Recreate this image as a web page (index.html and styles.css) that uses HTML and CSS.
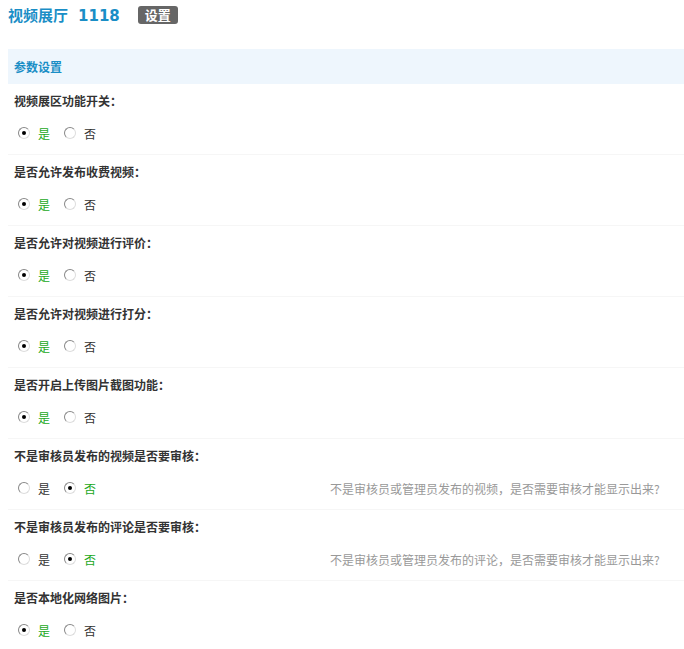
FILE: index.html
```html
<!DOCTYPE html>
<html lang="zh-CN">

<head>
  <meta charset="UTF-8">
  <title>视频展厅</title>
  <link rel="stylesheet" href="styles.css">
</head>

<body>
  <div class="page__title">
    <h1 class="title">视频展厅<span class="title__num">1118</span></h1>
    <a href="" class="badge">设置</a>
  </div>

  <div class="panel">
    <div class="panel__head">参数设置</div>

    <div class="opt">
      <div class="opt__label">视频展区功能开关：</div>
      <div class="opt__line">
        <div class="opt__radios">
          <label class="radio _on"><span class="radio__dot"></span><span class="radio__text">是</span></label>
          <label class="radio"><span class="radio__dot"></span><span class="radio__text">否</span></label>
        </div>
      </div>
    </div>

    <div class="opt">
      <div class="opt__label">是否允许发布收费视频：</div>
      <div class="opt__line">
        <div class="opt__radios">
          <label class="radio _on"><span class="radio__dot"></span><span class="radio__text">是</span></label>
          <label class="radio"><span class="radio__dot"></span><span class="radio__text">否</span></label>
        </div>
      </div>
    </div>

    <div class="opt">
      <div class="opt__label">是否允许对视频进行评价：</div>
      <div class="opt__line">
        <div class="opt__radios">
          <label class="radio _on"><span class="radio__dot"></span><span class="radio__text">是</span></label>
          <label class="radio"><span class="radio__dot"></span><span class="radio__text">否</span></label>
        </div>
      </div>
    </div>

    <div class="opt">
      <div class="opt__label">是否允许对视频进行打分：</div>
      <div class="opt__line">
        <div class="opt__radios">
          <label class="radio _on"><span class="radio__dot"></span><span class="radio__text">是</span></label>
          <label class="radio"><span class="radio__dot"></span><span class="radio__text">否</span></label>
        </div>
      </div>
    </div>

    <div class="opt">
      <div class="opt__label">是否开启上传图片截图功能：</div>
      <div class="opt__line">
        <div class="opt__radios">
          <label class="radio _on"><span class="radio__dot"></span><span class="radio__text">是</span></label>
          <label class="radio"><span class="radio__dot"></span><span class="radio__text">否</span></label>
        </div>
      </div>
    </div>

    <div class="opt">
      <div class="opt__label">不是审核员发布的视频是否要审核：</div>
      <div class="opt__line">
        <div class="opt__radios">
          <label class="radio"><span class="radio__dot"></span><span class="radio__text">是</span></label>
          <label class="radio _on"><span class="radio__dot"></span><span class="radio__text">否</span></label>
        </div>
        <div class="opt__hint">不是审核员或管理员发布的视频，是否需要审核才能显示出来?</div>
      </div>
    </div>

    <div class="opt">
      <div class="opt__label">不是审核员发布的评论是否要审核：</div>
      <div class="opt__line">
        <div class="opt__radios">
          <label class="radio"><span class="radio__dot"></span><span class="radio__text">是</span></label>
          <label class="radio _on"><span class="radio__dot"></span><span class="radio__text">否</span></label>
        </div>
        <div class="opt__hint">不是审核员或管理员发布的评论，是否需要审核才能显示出来?</div>
      </div>
    </div>

    <div class="opt">
      <div class="opt__label">是否本地化网络图片：</div>
      <div class="opt__line">
        <div class="opt__radios">
          <label class="radio _on"><span class="radio__dot"></span><span class="radio__text">是</span></label>
          <label class="radio"><span class="radio__dot"></span><span class="radio__text">否</span></label>
        </div>
      </div>
    </div>
  </div>
</body>

</html>
```

FILE: styles.css
```css
body {
  margin: 0;
  padding: 0 0 0 8px;
  font-family: "Noto Sans CJK SC", "DejaVu Sans", sans-serif;
  font-size: 12px;
  color: #333;
  background-color: #fff;
}

.page__title {
  display: flex;
  align-items: center;
  height: 30px;
}

.title {
  margin: 0;
  font-size: 15px;
  font-weight: bold;
  color: #1a8ec6;
  line-height: 30px;
}

.title__num {
  margin-left: 10px;
  font-family: "DejaVu Sans", sans-serif;
  font-size: 15px;
}

.badge {
  margin-left: 18px;
  padding: 0 7px;
  height: 18px;
  line-height: 18px;
  border-radius: 3px;
  background-color: #666;
  color: #fff;
  font-weight: bold;
  font-size: 13px;
  text-decoration: none;
}

.panel {
  margin-top: 19px;
}

.panel__head {
  height: 35px;
  line-height: 35px;
  padding-left: 6px;
  background-color: #eef6fd;
  color: #1a8ec6;
  font-weight: bold;
}

.opt {
  padding: 7px 0 11px 6px;
  border-bottom: 1px solid #f6f6f6;
}

.opt__label {
  line-height: 20px;
  font-weight: bold;
  color: #333;
}

.opt__line {
  display: flex;
  align-items: center;
  margin-top: 12px;
  height: 20px;
}

.opt__radios {
  display: flex;
  width: 312px;
  padding-left: 4px;
}

.opt__hint {
  color: #999;
}

.radio {
  display: flex;
  align-items: center;
  margin-right: 14px;
  color: #333;
}

.radio._on .radio__text {
  color: #1aa81a;
}

.radio__dot {
  position: relative;
  width: 10px;
  height: 10px;
  border: 1px solid;
  border-color: #888 #ddd #ddd #888;
  border-radius: 50%;
  background-color: #fff;
  margin-right: 8px;
}

.radio._on .radio__dot::after {
  content: '';
  position: absolute;
  left: 3px;
  top: 3px;
  width: 4px;
  height: 4px;
  border-radius: 50%;
  background-color: #000;
}
```
